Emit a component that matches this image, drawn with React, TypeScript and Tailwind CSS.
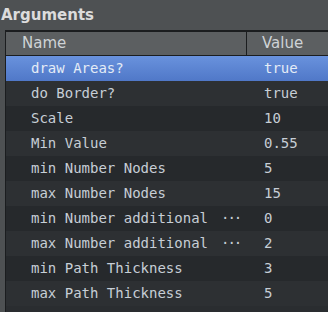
import React from 'react'

interface Arg {
  name: string
  value: string
  elided?: boolean
}

const args: Arg[] = [
  { name: 'draw Areas?', value: 'true' },
  { name: 'do Border?', value: 'true' },
  { name: 'Scale', value: '10' },
  { name: 'Min Value', value: '0.55' },
  { name: 'min Number Nodes', value: '5' },
  { name: 'max Number Nodes', value: '15' },
  { name: 'min Number additional', value: '0', elided: true },
  { name: 'max Number additional', value: '2', elided: true },
  { name: 'min Path Thickness', value: '3' },
  { name: 'max Path Thickness', value: '5' },
]

const sans = { fontFamily: '"DejaVu Sans", "Liberation Sans", sans-serif' }
const mono = { fontFamily: '"DejaVu Sans Mono", "Liberation Mono", monospace' }

export default function App() {
  const selected = 0

  return (
    <div className="w-[328px] h-[312px] bg-[#4e5153] flex flex-col overflow-hidden" style={sans}>
      {/* Title */}
      <div className="h-[30px] pl-[1px] pt-[4px] text-[15px] font-bold text-[#dcdcdc] leading-[22px]">
        Arguments
      </div>

      {/* Table */}
      <div className="flex-1 ml-[5px] border-l border-t-2 border-[#1b1d1f] bg-[#2a2d30] flex flex-col min-h-0">
        {/* Header */}
        <div className="flex h-[24px] bg-[#5c5f61] border-b border-[#1b1d1f] text-[15px] text-[#cfd3d6] shrink-0">
          <div className="w-[241px] pl-[16px] flex items-center border-r border-[#1b1d1f]">Name</div>
          <div className="flex-1 pl-[15px] flex items-center">Value</div>
        </div>

        {/* Rows */}
        <div className="flex flex-col text-[14px]" style={mono}>
          {args.map((a, i) => (
            <div
              key={a.name}
              className={`flex h-[25px] items-center ${
                i === selected
                  ? 'bg-gradient-to-b from-[#6992dd] to-[#5078c8] text-[#e4ecf6]'
                  : i % 2 === 1
                    ? 'bg-[#2d3033] text-[#c7ced6]'
                    : 'bg-[#26292c] text-[#c7ced6]'
              }`}
            >
              <div className="w-[242px] pl-[25px] whitespace-nowrap overflow-hidden">
                {a.name}
                {a.elided && <span className="ml-[13px] tracking-[-2px]">···</span>}
              </div>
              <div className="flex-1 pl-[16px] whitespace-nowrap">{a.value}</div>
            </div>
          ))}
        </div>
      </div>
    </div>
  )
}
